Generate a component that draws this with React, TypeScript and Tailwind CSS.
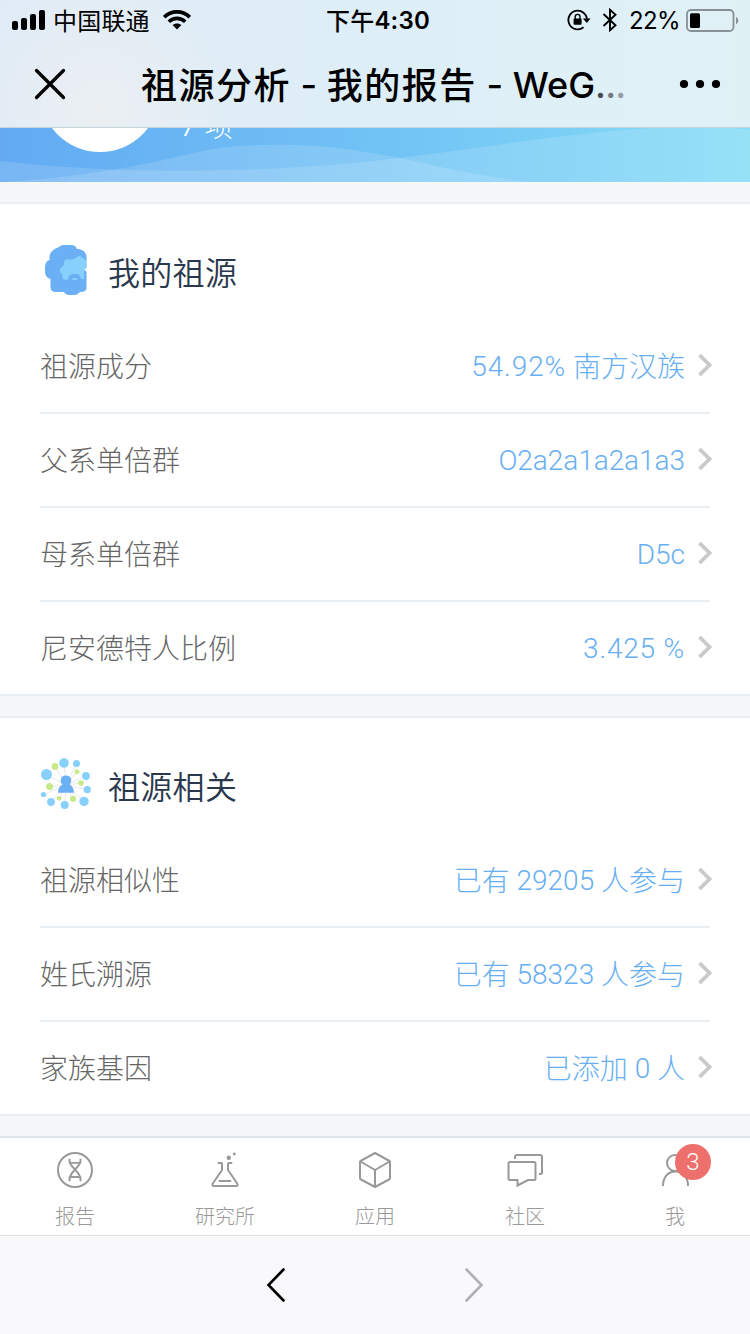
import type { ReactNode } from "react";

interface RowData {
  label: string;
  value: ReactNode;
}

interface TabItem {
  label: string;
  icon: ReactNode;
  badge?: number;
}

const ancestryRows: RowData[] = [
  {
    label: "祖源成分",
    value: (
      <>
        <span className="align-[1px] tracking-[0.9px]">54.92%</span> 南方汉族
      </>
    ),
  },
  { label: "父系单倍群", value: <span className="align-[1px] tracking-[-0.05px]">O2a2a1a2a1a3</span> },
  { label: "母系单倍群", value: <span className="align-[1px]">D5c</span> },
  { label: "尼安德特人比例", value: <span className="align-[1px] tracking-[0.8px]">3.425 %</span> },
];

const relatedRows: RowData[] = [
  {
    label: "祖源相似性",
    value: (
      <>
        已有 <span className="align-[1px]">29205</span> 人参与
      </>
    ),
  },
  {
    label: "姓氏溯源",
    value: (
      <>
        已有 <span className="align-[1px]">58323</span> 人参与
      </>
    ),
  },
  {
    label: "家族基因",
    value: (
      <>
        已添加 <span className="align-[1px]">0</span> 人
      </>
    ),
  },
];

function StatusBar() {
  return (
    <div className="flex h-10 items-center justify-between pl-3 pr-[10px] text-[24px] leading-none">
      <div className="flex w-[300px] items-center">
        <svg width="34" height="20" viewBox="0 0 34 20">
          <rect x="0" y="11" width="6" height="9" rx="2" />
          <rect x="9" y="8" width="6" height="12" rx="2" />
          <rect x="18" y="4" width="6" height="16" rx="2" />
          <rect x="27" y="0" width="6" height="20" rx="2" />
        </svg>
        <span className="ml-[7px] mt-[3px] tracking-[0.2px]">中国联通</span>
        <svg className="ml-[13px]" width="28" height="20" viewBox="0 0 28 20" fill="none" stroke="#000" strokeWidth="3.6">
          <path d="M1.2 7.2C8 .1 20 .1 26.8 7.2" />
          <path d="M5.8 11.8C10.5 7.2 17.5 7.2 22.2 11.8" />
          <path d="M14 19.5L9.5 15C12 12.9 16 12.9 18.5 15Z" fill="#000" stroke="none" />
        </svg>
      </div>
      <span className="ml-1 mt-[2px] font-semibold tracking-[0.2px]">
        <span className="align-[-1px] font-medium">下午</span>4:30
      </span>
      <div className="flex w-[300px] items-center justify-end">
        <svg width="24" height="22" viewBox="0 0 24 22" fill="none" stroke="#000" strokeWidth="1.8">
          <path d="M16.5 18.3A9.3 9.3 0 1 1 20 11" />
          <path d="M15.8 9.5H23.6L19.8 14Z" fill="#000" stroke="none" />
          <rect x="6.6" y="9.5" width="8" height="6.2" rx="1" fill="#000" stroke="none" />
          <path d="M8.2 10V7.8a2.4 2.4 0 0 1 4.8 0V10" strokeWidth="1.4" />
        </svg>
        <svg className="ml-[11px]" width="16" height="24" viewBox="0 0 16 24" fill="none" stroke="#000" strokeWidth="1.9">
          <path d="M1.5 6L13.5 17.3L8 22.2V1.8L13.5 6.7L1.5 18" />
        </svg>
        <span className="ml-[11px] mt-[2px] text-[24px] tracking-[-0.6px]">22%</span>
        <svg className="ml-[6px] mt-px" width="54" height="24" viewBox="0 0 54 24">
          <rect x="1" y="1" width="46.5" height="21" rx="4" fill="none" stroke="#879195" strokeWidth="1.8" />
          <rect x="4" y="4.3" width="10" height="14.6" rx="1.5" />
          <path d="M50 8c3 1 3 6 0 7z" fill="#879195" />
        </svg>
      </div>
    </div>
  );
}

function Header() {
  return (
    <header className="h-32 shrink-0 border-b border-[#c5d5de] bg-[radial-gradient(circle_at_100px_110px,#ebeff2_0,#e5eef500_150px),linear-gradient(90deg,#dfebf7,#deeef7_50%,#e0f1f6)]">
      <StatusBar />
      <div className="flex h-[88px] items-center">
        <svg className="ml-[34px]" width="32" height="32" viewBox="0 0 32 32" stroke="#000" strokeWidth="3.3" strokeLinecap="round">
          <path d="M2.5 2.5L29.5 29.5M29.5 2.5L2.5 29.5" />
        </svg>
        <h1 className="ml-[75px] mt-[3px] w-[499px] whitespace-nowrap text-[36px] font-medium leading-[52px]">
          <span className="align-[-1px] tracking-[1.5px]">祖源分析</span>
          <span> - </span>
          <span className="align-[-1px] tracking-[1.5px]">我的报告</span>
          <span> - </span>
          <span>WeG</span>
          <span className="tracking-[-0.8px]">
            <span className="text-[#454c50]">.</span>
            <span className="text-[#747c80]">.</span>
            <span className="text-[#959ea2]">.</span>
          </span>
        </h1>
        <svg className="ml-[39px]" width="42" height="10" viewBox="0 0 42 10">
          <circle cx="5" cy="5" r="4.1" />
          <circle cx="21" cy="5" r="4.1" />
          <circle cx="37" cy="5" r="4.1" />
        </svg>
      </div>
    </header>
  );
}

// Scrolled mostly out of view: only the bottom edge shows under the header
function Banner() {
  return (
    <section className="grid h-[54px] shrink-0 grid-rows-[54px] overflow-hidden bg-linear-to-r from-[#63aaf3] via-[#71c2f5] to-[#86dcf6]">
      <svg className="col-start-1 row-start-1" width="750" height="54" viewBox="0 128 750 54" fill="#fff" fillOpacity="0.14">
        <path d="M0 182C60 179 110 171 150 163C190 154 215 147 240 146C310 142 345 148 400 158C440 167 480 176 528 182Z" />
        <path d="M0 161C120 175 260 173 375 161C470 150 560 134 650 128H730L750 130V182H0Z" />
      </svg>
      <div className="col-start-1 row-start-1 flex items-end self-end pb-[30px] pl-10">
        <div className="size-[120px] rounded-full bg-white" />
        <p className="mb-[12px] ml-[21px] flex items-end text-[28px] font-light leading-7 text-white">
          <span>7</span>
          <span className="-mb-px ml-[8px]">项</span>
        </p>
      </div>
    </section>
  );
}

function BeardIcon() {
  return (
    <svg width="52" height="58" viewBox="0 0 52 58">
      <path
        d="M19 4C21 2 23 2 25 2H31C34 2 36 3 37 6C42 6 46.5 9 46.5 14V45C46.5 48 44 49 40 49C38 51 37 52 34 52H29C27 52 25 51 24 49H17C12 49 10.5 47 10.5 44V36C7 35 5 32 5 29V25C5 21 6 18 9.5 17V14C9.5 9 14 6 19 4Z"
        fill="#6bb0f4"
      />
      <path
        d="M38.5 12.5C36 16 31 17 25 16.5C24 19 24.5 23 21.5 24.5C19 25.5 19.5 30 22.5 31V34C22.5 36 24 37 28 37C28 33 30 31 34.5 31C39 31 41 33 41 36H44V29L46.5 27V20C45.5 16 42 14 38.5 12.5Z"
        fill="#87d0fb"
      />
      <path d="M32 37c0-3 5.5-3 5.5 0z" fill="#87d0fb" />
      <path d="M47 24.5L44.5 26.5L47 29z" fill="#fff" />
    </svg>
  );
}

const dots = [
  { x: 6.5, y: 19.5, r: 5.5, fill: "#87d0fb" },
  { x: 24, y: 8, r: 4.8, fill: "#87d0fb" },
  { x: 36.5, y: 8.5, r: 3.5, fill: "#87d0fb" },
  { x: 46, y: 21, r: 3.9, fill: "#87d0fb" },
  { x: 47.3, y: 34.7, r: 3.6, fill: "#87d0fb" },
  { x: 44, y: 46.4, r: 4.7, fill: "#87d0fb" },
  { x: 24.7, y: 50, r: 4, fill: "#87d0fb" },
  { x: 11, y: 47, r: 3.9, fill: "#87d0fb" },
  { x: 3.5, y: 39.5, r: 2.6, fill: "#87d0fb" },
  { x: 15, y: 11.5, r: 3.4, fill: "#c7e989" },
  { x: 37, y: 16.7, r: 2.5, fill: "#c7e989" },
  { x: 41, y: 28, r: 2.8, fill: "#c7e989" },
  { x: 33, y: 43.8, r: 3.1, fill: "#c7e989" },
  { x: 19.2, y: 43.3, r: 2.4, fill: "#c7e989" },
  { x: 9.5, y: 31.6, r: 3.5, fill: "#c7e989" },
];

function NetworkIcon() {
  return (
    <svg width="52" height="62" viewBox="0 0 52 62">
      {dots.map((dot) => (
        <line key={dot.x} x1="26" y1="30" x2={dot.x} y2={dot.y} stroke="#e2e4e6" strokeWidth="0.9" />
      ))}
      {dots.map((dot) => (
        <circle key={dot.x} cx={dot.x} cy={dot.y} r={dot.r} fill={dot.fill} />
      ))}
      <path d="M22.5 29.5C19.5 27 20 20.5 26 20.5S32.5 27 29.5 29.5C32 31 34 33.5 34 37.7H18C18 33.5 20 31 22.5 29.5Z" fill="#6bb0f4" />
    </svg>
  );
}

function Row({ label, value }: RowData) {
  return (
    <li className="flex h-[94px] items-center whitespace-nowrap border-b-2 border-[#e9eef2] pt-[3px] text-[28px] font-light last:h-[92px] last:border-0">
      <span className="text-[#666]">{label}</span>
      <span className="ml-auto mr-[12px] text-[#68aff2]">{value}</span>
      <svg className="-mr-[3px] -mt-[6px]" width="16" height="24" viewBox="0 0 16 24" fill="none" stroke="#c9c9c9" strokeWidth="3.8">
        <path d="M2.5 2L12.5 12L2.5 22" />
      </svg>
    </li>
  );
}

function Card({ icon, title, rows }: { icon: ReactNode; title: string; rows: RowData[] }) {
  return (
    <section className="mt-5 shrink-0 border-y-2 border-[#e9eef2] bg-white px-10">
      <div className="flex h-[116px] items-center gap-4 pt-5">
        {icon}
        <h2 className="mt-1 text-[32px] font-[350] leading-[48px] tracking-[0.3px] text-[#2a384d]">{title}</h2>
      </div>
      <ul>
        {rows.map((row) => (
          <Row key={row.label} {...row} />
        ))}
      </ul>
    </section>
  );
}

const iconProps = {
  width: 40,
  height: 40,
  viewBox: "0 0 40 40",
  fill: "none",
  stroke: "#999",
  strokeWidth: 2,
};

const tabs: TabItem[] = [
  {
    label: "报告",
    icon: (
      <svg {...iconProps}>
        <circle cx="20" cy="20" r="17" />
        <path d="M14.5 8.8V11C14.5 17 25.5 22 25.5 29V31.2M25.5 8.8V11C25.5 17 14.5 22 14.5 29V31.2" />
        <path d="M14.5 12.8H25.5M14.5 27H25.5" strokeWidth="1.8" />
      </svg>
    ),
  },
  {
    label: "研究所",
    icon: (
      <svg {...iconProps} strokeLinecap="round" strokeLinejoin="round">
        <path d="M13.5 13H16Q17 13 17 14V20L7.8 33.5Q6.5 36 9 36H31Q33.5 36 32.2 33.5L23 20V14Q23 13 24 13H26.5M14.5 31H25.5" />
        <circle cx="23.8" cy="7.7" r="2.2" fill="#999" stroke="none" />
        <circle cx="29.3" cy="4" r="1.4" fill="#999" stroke="none" />
      </svg>
    ),
  },
  {
    label: "应用",
    icon: (
      <svg {...iconProps} strokeLinejoin="round">
        <path d="M20 3L34.5 11Q35 11.5 35 12V28Q35 29 34 29.5L20 37L6 29.5Q5 29 5 28V12Q5 11.5 5.5 11ZM5.5 11.5L20 20L34.5 11.5M20 20V37" />
      </svg>
    ),
  },
  {
    label: "社区",
    icon: (
      <svg {...iconProps}>
        <path d="M5 12H29Q30.5 12 30.5 13.5V28.5Q30.5 30 29 30H23L12.5 35.5V30H5Q3.5 30 3.5 28.5V13.5Q3.5 12 5 12ZM10 9V7Q10 5 12 5H35Q37 5 37 7V23Q37 24 34 24" />
      </svg>
    ),
  },
  {
    label: "我",
    badge: 3,
    icon: (
      <svg {...iconProps}>
        <circle cx="20" cy="13" r="8" />
        <path d="M8 36C8 27 13 21.5 20.5 21.5S33 27 33 36" />
      </svg>
    ),
  },
];

function TabBar() {
  return (
    <nav className="mt-5 grid h-[99px] shrink-0 grid-cols-5 border-t-2 border-[#dfe5e9] bg-white">
      {tabs.map((tab) => (
        <div key={tab.label} className="relative flex flex-col items-center pt-3">
          {tab.icon}
          <span className="mt-3 text-[20px] font-light leading-[30px] text-[#999]">{tab.label}</span>
          {tab.badge && (
            <span className="absolute left-[75px] top-[6px] flex size-9 items-center justify-center rounded-full bg-[#ee706c] font-[Roboto,sans-serif] text-[24px] font-light text-white">
              {tab.badge}
            </span>
          )}
        </div>
      ))}
    </nav>
  );
}

function BrowserBar() {
  return (
    <footer className="flex h-[99px] shrink-0 items-center gap-[178px] border-t border-[#e1e2e4] bg-[#f9f9fb] pl-[266px]">
      <svg width="20" height="36" viewBox="0 0 20 36" fill="none" stroke="#000" strokeWidth="2.6" strokeLinecap="round">
        <path d="M17.5 2.5L2.5 18L17.5 33.5" />
      </svg>
      <svg width="20" height="36" viewBox="0 0 20 36" fill="none" stroke="#b1b1b3" strokeWidth="2.6" strokeLinecap="round">
        <path d="M2.5 2.5L17.5 18L2.5 33.5" />
      </svg>
    </footer>
  );
}

export default function App() {
  return (
    <div className="flex h-[1334px] w-[750px] flex-col overflow-hidden bg-[#f5f7f9] font-[Inter,'Noto_Sans_CJK_SC',sans-serif]">
      <Header />
      <Banner />
      <main className="font-[Roboto,'Noto_Sans_CJK_SC',sans-serif]">
        <Card icon={<BeardIcon />} title="我的祖源" rows={ancestryRows} />
        <Card icon={<NetworkIcon />} title="祖源相关" rows={relatedRows} />
      </main>
      <TabBar />
      <BrowserBar />
    </div>
  );
}
